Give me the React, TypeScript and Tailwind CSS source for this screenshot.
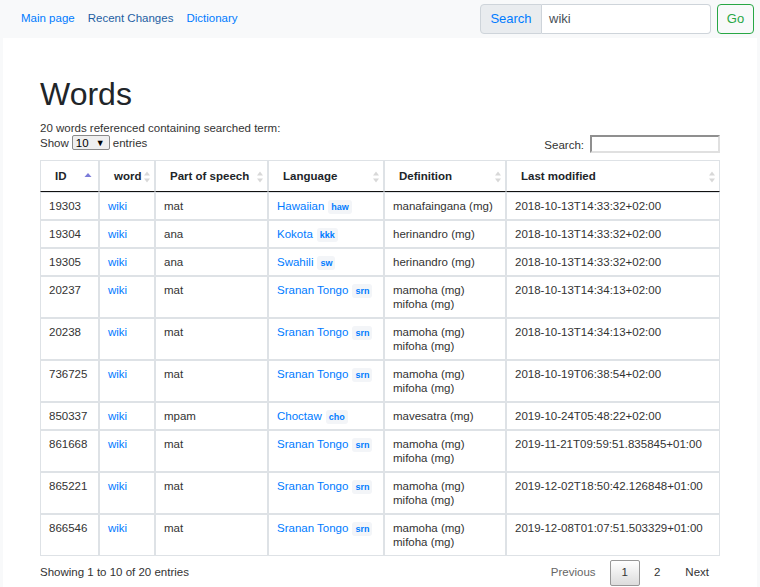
import React from 'react';

interface Row {
  id: string;
  pos: string;
  lang: string;
  code: string;
  defs: string[];
  modified: string;
}

const mg2 = ['mamoha (mg)', 'mifoha (mg)'];

const rows: Row[] = [
  { id: '19303', pos: 'mat', lang: 'Hawaiian', code: 'haw', defs: ['manafaingana (mg)'], modified: '2018-10-13T14:33:32+02:00' },
  { id: '19304', pos: 'ana', lang: 'Kokota', code: 'kkk', defs: ['herinandro (mg)'], modified: '2018-10-13T14:33:32+02:00' },
  { id: '19305', pos: 'ana', lang: 'Swahili', code: 'sw', defs: ['herinandro (mg)'], modified: '2018-10-13T14:33:32+02:00' },
  { id: '20237', pos: 'mat', lang: 'Sranan Tongo', code: 'srn', defs: mg2, modified: '2018-10-13T14:34:13+02:00' },
  { id: '20238', pos: 'mat', lang: 'Sranan Tongo', code: 'srn', defs: mg2, modified: '2018-10-13T14:34:13+02:00' },
  { id: '736725', pos: 'mat', lang: 'Sranan Tongo', code: 'srn', defs: mg2, modified: '2018-10-19T06:38:54+02:00' },
  { id: '850337', pos: 'mpam', lang: 'Choctaw', code: 'cho', defs: ['mavesatra (mg)'], modified: '2019-10-24T05:48:22+02:00' },
  { id: '861668', pos: 'mat', lang: 'Sranan Tongo', code: 'srn', defs: mg2, modified: '2019-11-21T09:59:51.835845+01:00' },
  { id: '865221', pos: 'mat', lang: 'Sranan Tongo', code: 'srn', defs: mg2, modified: '2019-12-02T18:50:42.126848+01:00' },
  { id: '866546', pos: 'mat', lang: 'Sranan Tongo', code: 'srn', defs: mg2, modified: '2019-12-08T01:07:51.503329+01:00' },
];

const columns = [
  { label: 'ID', width: 59, active: true },
  { label: 'word', width: 56 },
  { label: 'Part of speech', width: 113 },
  { label: 'Language', width: 116 },
  { label: 'Definition', width: 122 },
  { label: 'Last modified', width: 214 },
];

const SortIcon = ({ active }: { active?: boolean }) =>
  active ? (
    <svg width="8" height="12" viewBox="0 0 8 12" className="absolute right-[6px] top-[9px]">
      <path d="M4 3 L7.5 7 L0.5 7 Z" fill="#7b7bd9" />
    </svg>
  ) : (
    <svg width="8" height="14" viewBox="0 0 8 14" className="absolute right-[3px] top-[9px]">
      <path d="M4 1.5 L7 5.5 L1 5.5 Z" fill="#d8d8d8" />
      <path d="M4 12.5 L7 8.5 L1 8.5 Z" fill="#d8d8d8" />
    </svg>
  );

const cell = 'border border-[#dee2e6] align-top px-[8px] pt-[6px] pb-[6px] text-left';

export default function App() {
  return (
    <div className="min-h-[587px] bg-[#f8f9fa] text-[#212529]" style={{ fontFamily: '"Liberation Sans", Arial, sans-serif' }}>
      <nav className="flex h-[38px] items-center justify-between pl-[21px] pr-[6px] text-[11.5px]">
        <div className="flex gap-[13px]">
          <a className="text-[#007bff]">Main page</a>
          <a className="text-[#1f5fa3]">Recent Changes</a>
          <a className="text-[#007bff]">Dictionary</a>
        </div>
        <div className="flex items-center">
          <span className="flex h-[30px] w-[62px] items-center justify-center rounded-l-[4px] border border-[#ced4da] bg-[#e9ecef] text-[13px] text-[#007bff]">
            Search
          </span>
          <span className="flex h-[30px] w-[169px] items-center rounded-r-[4px] border border-l-0 border-[#ced4da] bg-white pl-[7px] text-[13px] text-[#495057]">
            wiki
          </span>
          <span className="ml-[6px] flex h-[30px] w-[37px] items-center justify-center rounded-[4px] border border-[#28a745] text-[13px] text-[#28a745]">
            Go
          </span>
        </div>
      </nav>

      <main className="mx-[3px] bg-white px-[37px] pt-[37px] pb-[20px]">
        <h1 className="mb-[8px] text-[32px] leading-[38px] font-normal">Words</h1>
        <p className="text-[11.5px] leading-[14px] text-[#333]">20 words referenced containing searched term:</p>
        <div className="flex items-start justify-between text-[11.5px] leading-[14px] text-[#333]">
          <div className="flex items-center">
            Show
            <span className="mx-[3px] flex h-[15px] w-[38px] items-center justify-between rounded-[2px] border border-[#8a8a8a] bg-[#efefef] pl-[3px] pr-[4px] text-[11.5px] text-black">
              <span>10</span>
              <span className="text-[9px]">▼</span>
            </span>
            entries
          </div>
          <div className="flex items-center">
            <span className="mt-[2px] mr-[6px]">Search:</span>
            <span className="h-[18px] w-[130px] border-2 border-t-[#8f8f8f] border-l-[#8f8f8f] border-r-[#e0e0e0] border-b-[#e0e0e0] bg-white" />
          </div>
        </div>

        <table className="mt-[7px] w-[680px] table-fixed border-separate border-spacing-0 text-[11.5px] leading-[14px] text-[#333]">
          <colgroup>
            {columns.map((c) => (
              <col key={c.label} style={{ width: c.width }} />
            ))}
          </colgroup>
          <thead>
            <tr>
              {columns.map((c) => (
                <th
                  key={c.label}
                  className="relative border border-b-[#111] border-[#dee2e6] pt-[8px] pb-[8px] pl-[14px] pr-[16px] text-left font-bold text-[#212529]"
                >
                  {c.label}
                  <SortIcon active={c.active} />
                </th>
              ))}
            </tr>
          </thead>
          <tbody>
            {rows.map((r) => (
              <tr key={r.id}>
                <td className={cell}>{r.id}</td>
                <td className={cell}>
                  <a className="text-[#007bff]">wiki</a>
                </td>
                <td className={cell}>{r.pos}</td>
                <td className={cell}>
                  <a className="text-[#007bff]">{r.lang}</a>
                  <span className="ml-[4px] rounded-[3px] bg-[#f3f5f8] px-[3px] py-[2px] text-[9px] leading-[8px] font-bold text-[#007bff]">
                    {r.code}
                  </span>
                </td>
                <td className={cell}>
                  {r.defs.map((d) => (
                    <div key={d}>{d}</div>
                  ))}
                </td>
                <td className={cell}>{r.modified}</td>
              </tr>
            ))}
          </tbody>
        </table>

        <div className="mt-[3px] flex w-[680px] items-center justify-between text-[11.5px] text-[#333]">
          <span>Showing 1 to 10 of 20 entries</span>
          <div className="flex items-center gap-[3px]">
            <span className="px-[11px] py-[5px] text-[#666]">Previous</span>
            <span className="flex h-[26px] items-center rounded-[2px] border border-[#979797] bg-gradient-to-b from-white to-[#dcdcdc] px-[11px]">
              1
            </span>
            <span className="px-[11px] py-[5px]">2</span>
            <span className="px-[11px] py-[5px]">Next</span>
          </div>
        </div>
      </main>
    </div>
  );
}
